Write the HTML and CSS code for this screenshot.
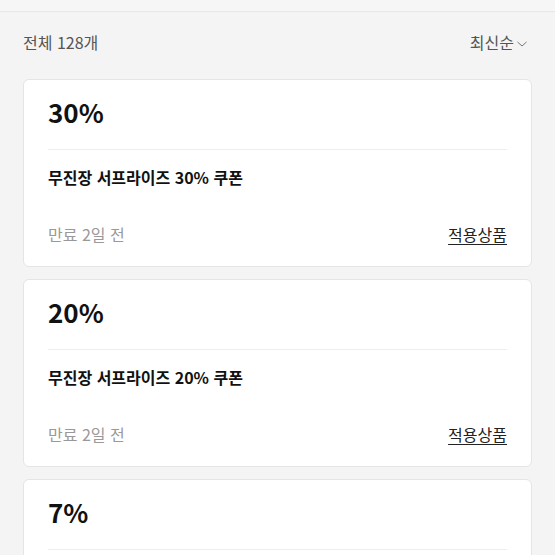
FILE: index.html
```html
<!DOCTYPE html>
<html lang="ko">
<head>
<meta charset="utf-8">
<link rel="stylesheet" href="styles.css">
</head>
<body>
<div class="topbar"></div>
<div class="head">
  <span class="count">전체 128개</span>
  <span class="sort">최신순<svg class="chev" width="12" height="8" viewBox="0 0 12 8"><polyline points="1.5,2 6,6 10.5,2" fill="none" stroke="#777" stroke-width="1"/></svg></span>
</div>
<div class="list">
  <div class="card">
    <div class="rate">30%</div>
    <div class="title">무진장 서프라이즈 30% 쿠폰</div>
    <div class="foot"><span class="exp">만료 2일 전</span><span class="link">적용상품</span></div>
  </div>
  <div class="card">
    <div class="rate">20%</div>
    <div class="title">무진장 서프라이즈 20% 쿠폰</div>
    <div class="foot"><span class="exp">만료 2일 전</span><span class="link">적용상품</span></div>
  </div>
  <div class="card">
    <div class="rate">7%</div>
    <div class="rest"></div>
  </div>
</div>
</body>
</html>
```
FILE: styles.css
```css
html, body {
  margin: 0;
  padding: 0;
  background: #f4f4f4;
  font-family: "Noto Sans CJK KR", "Noto Sans", sans-serif;
  overflow: hidden;
}
.topbar {
  height: 11px;
  background: #f6f6f6;
  border-bottom: 1px solid #e6e6e6;
}
.head {
  height: 67px;
  box-sizing: border-box;
  padding: 0 27px 7px 23px;
  display: flex;
  align-items: center;
  justify-content: space-between;
  font-size: 16px;
  color: #555;
}
.sort {
  display: flex;
  align-items: center;
  gap: 2px;
}
.chev { margin-top: 3px; }
.list {
  padding: 0 23px;
  display: flex;
  flex-direction: column;
  gap: 12px;
}
.card {
  background: #fff;
  border: 1px solid #e5e5e5;
  border-radius: 6px;
  padding: 0 24px;
}
.rate {
  height: 70px;
  box-sizing: border-box;
  padding-bottom: 7px;
  display: flex;
  align-items: center;
  font-size: 26px;
  font-weight: 700;
  color: #111;
  border-bottom: 1px solid #eeeeee;
}
.title {
  height: 58px;
  box-sizing: border-box;
  padding-bottom: 5px;
  display: flex;
  align-items: center;
  font-size: 16px;
  font-weight: 700;
  color: #111;
}
.foot {
  height: 58px;
  box-sizing: border-box;
  padding-bottom: 6px;
  display: flex;
  align-items: center;
  justify-content: space-between;
  font-size: 16px;
}
.exp { color: #999; }
.link {
  color: #222;
  text-decoration: underline;
  text-underline-offset: 3px;
}
.rest { height: 116px; }
```
